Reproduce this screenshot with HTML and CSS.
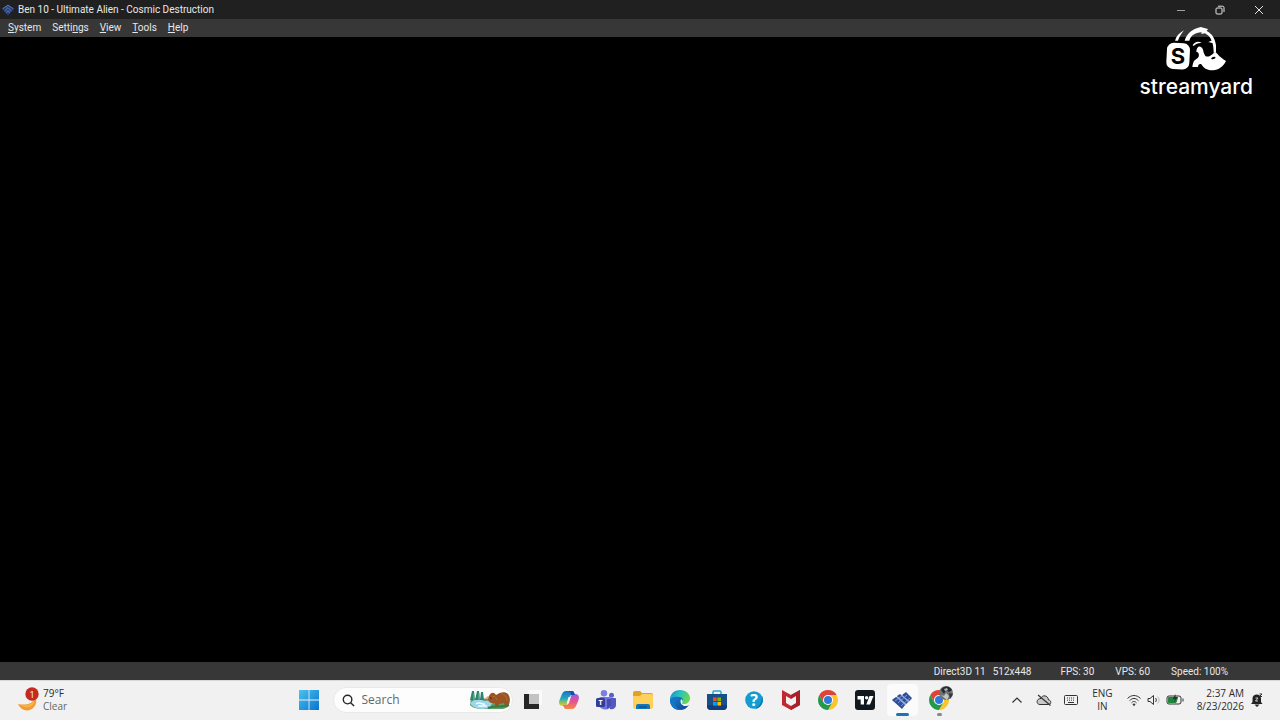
FILE: index.html
```html
<!DOCTYPE html>
<html lang="en">
<head>
  <meta charset="UTF-8">
  <meta name="viewport" content="width=device-width, initial-scale=1.0">
  <title>Ben 10 - Ultimate Alien - Cosmic Destruction</title>
  <link rel="stylesheet" href="styles.css">
</head>
<body>
  <div class="desktop">
    <header class="titlebar">
      <svg class="titlebar-icon" viewBox="0 0 20 20" aria-hidden="true">
        <path d="M0 8 10 1l10 7-10 11z" fill="#263f78"/>
        <path d="M1 8 10 2l9 6M4 12l6-6 6 6M7 15l3-4 3 4" fill="none" stroke="#6682c0" stroke-width="1.4"/>
      </svg>
      <h1 class="titlebar-text">Ben 10 - Ultimate Alien - Cosmic Destruction</h1>
      <div class="window-controls">
        <button type="button" aria-label="Minimize">
          <svg viewBox="0 0 10 10"><path d="M1 5.5h8" stroke="#a0a0a0"/></svg>
        </button>
        <button type="button" aria-label="Restore">
          <svg viewBox="0 0 10 10"><rect x="1" y="3" width="6" height="6" rx="1"/><path d="M3 1.2h4.5Q9 1.2 9 2.7V7"/></svg>
        </button>
        <button type="button" aria-label="Close">
          <svg viewBox="0 0 10 10"><path d="M1 1l8 8M9 1 1 9"/></svg>
        </button>
      </div>
    </header>

    <nav class="menubar">
      <button type="button"><u>S</u>ystem</button>
      <button type="button">Setti<u>n</u>gs</button>
      <button type="button"><u>V</u>iew</button>
      <button type="button"><u>T</u>ools</button>
      <button type="button"><u>H</u>elp</button>
    </nav>

    <main class="screen"></main>

    <footer class="statusbar">
      <span class="video">
        <span>Direct3D 11</span>
        <span>512x448</span>
      </span>
      <span>FPS: 30</span>
      <span>VPS: 60</span>
      <span>Speed: 100%</span>
    </footer>

    <div class="taskbar">
      <button type="button" class="weather">
        <svg class="weather-icon" viewBox="0 0 24 28" aria-hidden="true">
          <path d="M17 9c2 8-7 11-16 9 4 8 12 8 16 3 3-4 3-8 0-12z" fill="#f29a2e"/>
          <path d="M17 10c1 8-7 10-14 9 6 4 12 3 14-2 1-3 1-5 0-7z" fill="#f8b24c"/>
          <circle cx="15" cy="8" r="6.7" fill="#c42b1c"/>
          <text x="15" y="11.5" class="badge-text">1</text>
        </svg>
        <span class="weather-text">
          <span>79°F</span>
          <span class="weather-sky">Clear</span>
        </span>
      </button>

      <div class="apps">
        <button type="button" class="app" aria-label="Start">
          <svg viewBox="0 0 20 20">
            <defs>
              <linearGradient id="win" x1="0" y1="0" x2="20" y2="20" gradientUnits="userSpaceOnUse"><stop stop-color="#4cc2ee"/><stop offset="1" stop-color="#0874cf"/></linearGradient>
            </defs>
            <path d="M0 0h9.6v9.6H0zM10.4 0H20v9.6h-9.6zM0 10.4h9.6V20H0zM10.4 10.4H20V20h-9.6z" fill="url(#win)"/>
          </svg>
        </button>

        <label class="search">
          <svg class="search-icon" viewBox="0 0 14 14"><circle cx="6" cy="6" r="4.6"/><path d="M9.3 9.3 13 13"/></svg>
          <input type="search" placeholder="Search" aria-label="Search">
          <svg class="search-art" viewBox="0 0 42 20" aria-hidden="true">
            <path d="M2 8 1 15c3 4 10 4 17 4h14c4 0 8-2 8-5L24 9z" fill="#5d9e62"/>
            <path d="M1 13c5-4 9-5 12-3s7 0 11 0c2 3-3 4-2 7-6 3-17 3-21-4z" fill="#9bd5ee"/>
            <path d="M7 14c4-3 6 1 9 0M9 16h9" stroke="#f4fcff" stroke-width="1.5" fill="none"/>
            <path d="M3 1h2l1 9H1zM8 1h2l1 9H6zM12 2h2l1 8h-4z" fill="#2d8474"/>
            <path d="M5 4v6M10 3v7" stroke="#7fbb84"/>
            <path d="M15 9l4-3 5 3z" fill="#e2a889"/>
            <path d="M20 6c2-4 5-4 7-1 4-3 9-4 12-1 3 4 2 9 0 13h-3l-1-4-5 1-1 3h-3v-4c-4 1-6-1-7-3z" fill="#9a5425"/>
            <path d="M22 8c3-3 5-1 6 2M32 4c4 0 6 3 6 7" stroke="#b86d38" fill="none"/>
            <circle cx="22" cy="8" r=".8" fill="#32170d"/>
            <path d="M19 18c6-3 13 0 21-3" stroke="#347d48" stroke-width="2" fill="none"/>
          </svg>
        </label>

        <button type="button" class="app" aria-label="Task View">
          <svg viewBox="0 0 20 20">
            <path d="M6 0h14v15H6z" fill="#fafafa"/>
            <path d="M2 4h15v15H2z" fill="#262626"/>
            <path d="M7 4h10v10H7z" fill="#c4c4c4"/>
          </svg>
        </button>

        <button type="button" class="app" aria-label="Copilot">
          <svg viewBox="0 0 20 20">
            <defs>
              <linearGradient id="cop1" x1="0" y1="0" x2="0" y2="1"><stop stop-color="#1670d4"/><stop offset=".5" stop-color="#28a9b6"/><stop offset=".75" stop-color="#8cc063"/><stop offset="1" stop-color="#f0c332"/></linearGradient>
              <linearGradient id="cop2" x1="0" y1="0" x2="0" y2="1"><stop stop-color="#9a5be0"/><stop offset=".5" stop-color="#e7528e"/><stop offset="1" stop-color="#f68a42"/></linearGradient>
            </defs>
            <path d="M7 1h6c2 0 2 2 3 4h-3c-2 0-2 1-3 4l-2 5c-1 2-2 2-4 2-4 0-4.500-3-3.500-6L3 4c1-2 2-3 4-3z" fill="url(#cop1)"/>
            <path d="M13 19H7c-2 0-2-2-3-4h3c2 0 2-1 3-4l2-5c1-2 2-2 4-2 4 0 4.500 3 3.500 6L17 16c-1 2-2 3-4 3z" fill="url(#cop2)"/>
            <path d="M9.5 7h2.3l-2 6.5H7.6z" fill="#f5f3f4"/>
            <path d="M8 1h5c2 0 2 2 3 4h-4c0-2-1-4-4-4z" fill="#1b4bae"/>
          </svg>
        </button>

        <button type="button" class="app" aria-label="Teams">
          <svg viewBox="0 0 20 20">
            <circle cx="8" cy="3.3" r="3.2" fill="#7b7fe0"/>
            <circle cx="15.5" cy="5.3" r="2.5" fill="#5960c9"/>
            <path d="M12 8h7q1 0 1 1v6c0 3-3 5-6 4z" fill="#5157c4"/>
            <path d="M4 7h10q1 0 1 1v7c0 6-11 6-12 0V8z" fill="#7176df"/>
            <path d="M11 9h4v7l-4 3z" fill="#474cae"/>
            <rect x="0" y="8" width="9" height="9" rx="1.5" fill="#343b99"/>
            <text x="4.5" y="15.3" class="teams-text">T</text>
          </svg>
        </button>

        <button type="button" class="app" aria-label="File Explorer">
          <svg viewBox="0 0 20 20">
            <path d="M0 3q0-2 2-2h5l2 2h9q2 0 2 2v10H0z" fill="#e2a126"/>
            <path d="M0 6h7l2-2h9q2 0 2 2v11q0 2-2 2H2q-2 0-2-2z" fill="#ffd15b"/>
            <path d="M3 19v-3q0-2 2-2h10q2 0 2 2v3z" fill="#1476b8"/>
            <path d="M6 17h8" stroke="#075289" stroke-width="1.3"/>
          </svg>
        </button>

        <button type="button" class="app" aria-label="Edge">
          <svg viewBox="0 0 20 20">
            <defs>
              <linearGradient id="edge1" x1="0" y1="0" x2="1" y2=".4"><stop stop-color="#1688cf"/><stop offset=".5" stop-color="#2bc0c2"/><stop offset="1" stop-color="#66d653"/></linearGradient>
              <linearGradient id="edge2" x1="0" y1="0" x2="1" y2="1"><stop stop-color="#1687d4"/><stop offset="1" stop-color="#123f8d"/></linearGradient>
            </defs>
            <path d="M0 10c0 6 4 10 10 10 4 0 7-2 9-5-3 2-6 1-7-1l2-2V6H1z" fill="url(#edge2)"/>
            <path d="M0 10C0 4 4 0 10 0c6 0 10 4 10 8 0 4-3 6-6 6-2 0-3-1-2-2 2-3 0-5-4-5-4 0-7 1-8 3z" fill="url(#edge1)"/>
            <path d="M7 8c-4 4-2 11 5 12-8 1-12-5-12-10 1-3 6-4 9-3z" fill="#1475c7"/>
            <path d="M11 9c2 1 2 3 1 4 0 2 4 2 6 1l1 1c-5 2-10 0-8-6z" fill="#f2f2f2"/>
          </svg>
        </button>

        <button type="button" class="app" aria-label="Microsoft Store">
          <svg viewBox="0 0 20 20">
            <path d="M6 5V2q0-1 1-1h6q1 0 1 1v3" fill="none" stroke="#28a9d1" stroke-width="1.5"/>
            <path d="M0 4h20v12q0 4-4 4H4q-4 0-4-4z" fill="#174f88"/>
            <path d="M0 15h20v1q0 4-4 4H4q-4 0-4-4z" fill="#123e78"/>
            <path d="M6 7.5h3.6v3.6H6z" fill="#f25022"/><path d="M10.4 7.5H14v3.6h-3.6z" fill="#7fba00"/>
            <path d="M6 12h3.6v3.6H6z" fill="#00a4ef"/><path d="M10.4 12H14v3.6h-3.6z" fill="#ffb900"/>
          </svg>
        </button>

        <button type="button" class="app" aria-label="Get Help">
          <svg viewBox="0 0 20 20">
            <circle cx="10" cy="10" r="8.8" fill="#149bcf"/>
            <path d="M11 19a9 9 0 0 0 7-13c0 7-3 10-7 13z" fill="#0b79b5"/>
            <text x="10" y="15.5" class="help-text">?</text>
          </svg>
        </button>

        <button type="button" class="app" aria-label="McAfee">
          <svg viewBox="0 0 20 20">
            <path d="M1 0l9 5 9-5v15l-9 5-9-5z" fill="#c3272f"/>
            <path d="M10 5l9-5v15l-9 5v-4l5-3V7l-5 3z" fill="#a91f2a"/>
            <path d="M5 6l5 3 5-3v7l-5 3-5-3z" fill="#f2f2f2"/>
          </svg>
        </button>

        <button type="button" class="app" aria-label="Chrome">
          <svg viewBox="0 0 20 20">
            <g id="chrome">
              <path d="M10 5h8.66A10 10 0 0 1 10 20l4.4-7.5z" fill="#fbc62c"/>
              <path d="M1.34 5 5.6 12.5h8.8L10 20A10 10 0 0 1 1.34 5z" fill="#23994c"/>
              <path d="M5.6 12.5 1.34 5A10 10 0 0 1 18.66 5H10z" fill="#dc4437"/>
              <circle cx="10" cy="10" r="5" fill="#fff"/>
              <circle cx="10" cy="10" r="4" fill="#2f78dc"/>
            </g>
          </svg>
        </button>

        <button type="button" class="app" aria-label="TradingView">
          <svg viewBox="0 0 20 20">
            <rect width="20" height="20" rx="3" fill="#101820"/>
            <path d="M2.5 6H9v8.5H5.7v-5H2.5zM14.5 6h4L15 14.5h-3.7z" fill="#fff"/>
            <circle cx="11.6" cy="7.8" r="1.7" fill="#fff"/>
          </svg>
        </button>

        <button type="button" class="app app-active" aria-label="Ben 10 - Ultimate Alien">
          <svg viewBox="0 0 20 20">
            <path d="M0 10 7 5l3 2 4-4 6 6-10 9-3-3z" fill="#9fb3dc"/>
            <path d="M0 10l4-3 9 8-3 4zM5 6l3-2 8 8-2 2zM10 5l4-3 6 6-3 3z" fill="#2f4f9c"/>
            <path d="M3 11l8-6M6 13l9-8M9 16l9-8M6 7l8 7M9 5l8 6" stroke="#8fa8dc" stroke-width=".8"/>
          </svg>
        </button>

        <button type="button" class="app app-running" aria-label="Chrome profile">
          <svg viewBox="0 0 20 20"><use href="#chrome"/></svg>
          <svg class="avatar" viewBox="0 0 14 14" aria-hidden="true">
            <circle cx="7" cy="7" r="7" fill="#6c7476"/>
            <path d="M2 4c3-5 9-4 11 0l-3 2-3-2-2 4z" fill="#292c2d"/>
            <path d="M2 9l3 1 2-3 3 3-2 4z" fill="#c3c8c9"/>
            <path d="M10 7l4 1-3 5z" fill="#313536"/>
            <path d="M5 3l3-1 1 2-3 1z" fill="#adb5b8"/>
          </svg>
        </button>
      </div>

      <div class="tray">
        <button type="button" aria-label="Show hidden icons">
          <svg class="icon-wide" viewBox="0 0 16 14"><path d="M3.5 9.5 8 5l4.5 4.5" stroke-width="1.2"/></svg>
        </button>
        <button type="button" aria-label="OneDrive not signed in">
          <svg class="icon-wide" viewBox="0 0 16 14"><path d="M4 11.5h8.5c3 0 3-4.5 0-4.5C12 2 6 1.5 5 5.5c-5 0-5 6-1 6z" fill="#c9c9c9"/><path d="M2 2l12.500 10.500" stroke-width="1.2"/></svg>
        </button>
        <button type="button" aria-label="Touch keyboard">
          <svg class="icon-wide" viewBox="0 0 16 14"><rect x="1.5" y="2.5" width="13" height="9" rx="1"/><path d="M4 5h8M4 7.2h8" stroke-dasharray="1 1"/><path d="M5 9.5h6"/></svg>
        </button>
        <button type="button" class="language"><span>ENG</span><span>IN</span></button>
        <button type="button" class="system" aria-label="Network, volume and battery">
          <svg class="icon-wide" viewBox="0 0 16 14"><path d="M1.5 5.5c4-4 9-4 13 0M3.5 7.7c3-3 6-3 9 0M5.5 9.9c2-2 3-2 5 0"/><circle cx="8" cy="11.6" r=".8" fill="#333"/></svg>
          <svg class="icon-wide" viewBox="0 0 16 14"><path d="M2 5.5h2l3.5-3v9L4 8.5H2z"/><path d="M9.5 5c1 1 1 3 0 4"/><path d="M11.5 3.5c2 2 2 5 0 7" stroke="#bbb"/></svg>
          <svg class="icon-battery" viewBox="0 0 18 14"><rect x="1" y="3" width="14" height="8" rx="2"/><path d="M2.5 4.5h9l-1.5 5H2.5z" fill="#21863b" stroke="#21863b"/><path d="M17 5.5v3"/><path d="M9.5 1l-3 5H9L8 9l4-5H9.5z" fill="#1b3e25" stroke="none"/></svg>
        </button>
        <button type="button" class="clock">
          <span>2:37 AM</span>
          <span>8/23/2026</span>
        </button>
        <button type="button" aria-label="Notifications">
          <svg class="icon-bell" viewBox="0 0 12 14"><path d="M0 11l1.5-2V5.500C1.500 0 10 0 10 5.500V9l1.500 2zM3.500 11.500h5L6 14z" fill="#222" stroke="none"/><path d="M4.500 5H7L4.500 8H7" stroke="#ccc"/><path d="M8.500 1H11L8.500 3.500H11"/></svg>
        </button>
      </div>
    </div>

    <!-- stream overlay -->
    <div class="brand">
      <svg class="brand-logo" viewBox="132 72 192 144" aria-hidden="true">
        <path d="M165 119c4-13 12-23 27-31-8 11-14 19-18 31z" fill="#fff"/>
        <path d="M194 119c6-20 21-35 48-41l22 6-4 6c16 8 25 22 28 43l0 22h-7c0-28-7-48-26-58l-11 2 1-5c-21 1-32 10-37 25z" fill="#fff"/>
        <path d="M218 133c6-12 18-14 27-7-10-1-17 2-24 9z" fill="#fff"/>
        <path d="M265 123l14-6 2 10-5-1z" fill="#fff"/>
        <path d="M229 154c0-24 20-22 22 1l5 10c8 5 16-1 23-7 5-5 10-4 14 2 7 8 15 14 25 20-8 16-22 27-39 28-17 1-28-6-35-18-6-2-9 0-10 8h-17c2-13 4-19 12-24 7-4 9-10 7-16-1-4-5-7-7-4z" fill="#fff"/>
        <ellipse cx="280" cy="171" rx="7" ry="3" fill="#000" transform="rotate(-22 280 171)"/>
        <rect x="140" y="126" width="69" height="79" rx="20" fill="#fff" transform="rotate(3 174 165)"/>
        <text x="174" y="188" class="brand-letter">S</text>
      </svg>
      <span class="brand-name">streamyard</span>
    </div>
  </div>
</body>
</html>
```
FILE: styles.css
```css
* {
  margin: 0;
  padding: 0;
  box-sizing: border-box;
}

body {
  overflow: hidden;
  background-color: #000;
  color: #e8e8e8;
  font-family: Roboto, sans-serif;
  font-size: 10px;
  line-height: 14px;
}

button {
  border: none;
  background: none;
  color: inherit;
  font: inherit;
}

svg {
  display: block;
  flex-shrink: 0;
}

.desktop {
  position: relative;
  height: 100vh;
  display: flex;
  flex-direction: column;
}

.titlebar {
  display: flex;
  align-items: center;
  height: 19px;
  padding: 0 2px;
  background-color: #202020;
}

.titlebar-icon {
  width: 12px;
  height: 12px;
  margin-right: 4px;
}

.titlebar-text {
  flex: 1;
  font-size: 10px;
  font-weight: 400;
}

.window-controls {
  display: flex;
}

.window-controls button {
  display: flex;
  align-items: center;
  justify-content: center;
  width: 39px;
  height: 18px;
}

.window-controls svg {
  width: 10px;
  height: 10px;
  fill: none;
  stroke: #e4e4e4;
}

.menubar {
  display: flex;
  align-items: center;
  gap: 11px;
  height: 18px;
  padding: 0 8px;
  background-color: #373737;
}

.menubar u {
  text-underline-offset: 1px;
}

.screen {
  flex: 1;
  background-color: #000;
}

.statusbar {
  display: flex;
  align-items: center;
  justify-content: flex-end;
  gap: 21px;
  height: 18px;
  padding: 2px 52px 0 0;
  background-color: #373737;
}

.video {
  display: flex;
  gap: 7px;
  margin-right: 8px;
}

/* taskbar */
.taskbar {
  display: grid;
  grid-template-columns: 1fr auto 1fr;
  align-items: center;
  height: 40px;
  padding-right: 16px;
  box-shadow: inset 0 1px #d8d8d8;
  background-color: #f1f1f1;
  color: #2c2c2c;
  font-family: "Open Sans", "Noto Sans", sans-serif;
}

.weather {
  display: flex;
  align-items: center;
  gap: 2px;
  padding-left: 17px;
  text-align: left;
}

.weather-icon {
  width: 24px;
  height: 28px;
}

.badge-text {
  fill: #fff;
  font-size: 9px;
  text-anchor: middle;
}

.weather-text,
.language,
.clock {
  display: flex;
  flex-direction: column;
  line-height: 13px;
}

.weather-sky {
  color: #666;
}

.apps {
  display: flex;
  align-items: center;
  margin-right: 16px;
}

.app {
  position: relative;
  display: flex;
  align-items: center;
  justify-content: center;
  width: 37px;
  height: 36px;
}

.app svg {
  width: 20px;
  height: 20px;
}

.search {
  display: flex;
  align-items: center;
  width: 180px;
  height: 26px;
  margin: 0 1px 0 5px;
  padding: 0 1px 0 8px;
  border: 1px solid #e9e9e9;
  border-radius: 13px;
  background-color: #fdfdfd;
}

.search-icon {
  width: 13px;
  height: 13px;
  fill: none;
  stroke: #262626;
  stroke-width: 1.5;
}

.search input {
  flex: 1;
  min-width: 0;
  margin-left: 7px;
  border: none;
  outline: none;
  background: none;
  color: #555;
  font: inherit;
  font-size: 12px;
}

.search input::placeholder {
  color: #666;
}

.search-art {
  width: 42px;
  height: 20px;
}

.app-active::before {
  content: "";
  position: absolute;
  inset: 2px 3px;
  border-radius: 4px;
  background-color: #fbfbfb;
}

.app-active svg {
  position: relative;
}

.app-active::after,
.app-running::after {
  content: "";
  position: absolute;
  bottom: 2px;
  width: 13px;
  height: 3px;
  border-radius: 2px;
  background-color: #1b75b5;
}

.app-running::after {
  width: 5px;
  background-color: #888;
}

.app .avatar {
  position: absolute;
  top: 4px;
  right: 5px;
  width: 14px;
  height: 14px;
}

.teams-text,
.help-text {
  fill: #fff;
  font-size: 7px;
  font-weight: 700;
  text-anchor: middle;
}

.help-text {
  font-size: 16px;
}

.tray {
  display: flex;
  align-items: center;
  justify-content: flex-end;
  gap: 1px;
}

.tray button {
  padding: 0 5px;
}

.tray svg {
  height: 14px;
  fill: none;
  stroke: #333;
}

.tray .icon-wide {
  width: 16px;
}

.tray .icon-battery {
  width: 18px;
}

.tray .icon-bell {
  width: 12px;
}

.tray .language {
  align-items: center;
  padding: 0 7px;
}

.tray .system {
  display: flex;
  gap: 4px;
}

.tray .clock {
  align-items: flex-end;
  padding: 0 0 0 7px;
}

.tray button:last-child {
  padding: 0 1px 0 6px;
}

/* overlay logo */
.brand {
  position: absolute;
  top: 25px;
  right: 27px;
  display: flex;
  flex-direction: column;
  align-items: center;
  color: #fff;
}

.brand-logo {
  width: 64px;
  height: 48px;
}

.brand-letter {
  fill: #000;
  font-family: Inter, sans-serif;
  font-size: 66px;
  font-weight: 700;
  text-anchor: middle;
}

.brand-name {
  font-family: Inter, sans-serif;
  font-size: 21px;
  font-weight: 500;
  line-height: 28px;
}
```
